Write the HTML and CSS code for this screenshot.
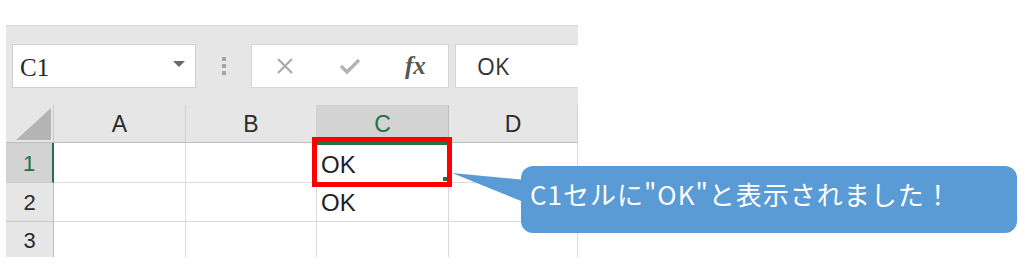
FILE: index.html
```html
<!DOCTYPE html>
<html lang="ja">
<head>
<meta charset="utf-8">
<link rel="stylesheet" href="styles.css">
</head>
<body>
<div class="sheet">
  <div class="formula-row">
    <div class="namebox">
      <span class="name">C1</span>
      <span class="caret"></span>
    </div>
    <div class="dots"><i></i><i></i><i></i></div>
    <div class="fxbox">
      <span class="fxbtn">
        <svg width="18" height="18" viewBox="0 0 18 18"><path d="M2 2 L16 16 M16 2 L2 16" stroke="#ababab" stroke-width="2.2" fill="none"/></svg>
      </span>
      <span class="fxbtn">
        <svg width="22" height="18" viewBox="0 0 22 18"><path d="M2 9 L8 15 L20 3" stroke="#b3b3b3" stroke-width="3.4" fill="none"/></svg>
      </span>
      <span class="fxbtn fx">fx</span>
    </div>
    <div class="valuebox">OK</div>
  </div>
  <div class="grid">
    <div class="corner"><span class="tri"></span></div>
    <div class="colh">A</div>
    <div class="colh">B</div>
    <div class="colh sel">C</div>
    <div class="colh">D</div>

    <div class="rowh sel">1</div>
    <div class="cell"></div>
    <div class="cell"></div>
    <div class="cell active">OK<span class="handle"></span></div>
    <div class="cell"></div>

    <div class="rowh">2</div>
    <div class="cell"></div>
    <div class="cell"></div>
    <div class="cell">OK</div>
    <div class="cell"></div>

    <div class="rowh last">3</div>
    <div class="cell last"></div>
    <div class="cell last"></div>
    <div class="cell last"></div>
    <div class="cell last"></div>
  </div>
  <div class="redbox"></div>
</div>
<div class="callout">
  <svg class="tail" width="80" height="40" viewBox="0 0 80 40"><polygon points="0,2 74,9 74,32" fill="#5b9bd5"/></svg>
  <div class="bubble">C1セルに"OK"と表示されました！</div>
</div>
</body>
</html>
```
FILE: styles.css
```css
* { box-sizing: border-box; }
html, body { margin: 0; padding: 0; }
body {
  width: 1024px;
  height: 264px;
  background: #ffffff;
  position: relative;
  overflow: hidden;
  font-family: "Liberation Sans", Arial, sans-serif;
}
.sheet {
  position: relative;
  margin-left: 6px;
  margin-top: 25px;
  width: 572px;
  background: #e6e6e6;
  border-top: 1px solid #d8d8d8;
}
.formula-row {
  display: flex;
  align-items: stretch;
  height: 79px;
  padding-top: 18px;
  padding-bottom: 17px;
}
.namebox {
  margin-left: 6px;
  width: 184px;
  background: #ffffff;
  border: 1px solid #cfcfcf;
  display: flex;
  align-items: center;
  justify-content: space-between;
  padding: 0 10px 0 7px;
}
.name {
  font-family: "Liberation Serif", "Times New Roman", serif;
  font-size: 25px;
  color: #262626;
  padding-top: 4px;
}
.caret {
  width: 0;
  height: 0;
  border-left: 6px solid transparent;
  border-right: 6px solid transparent;
  border-top: 6px solid #6a6a6a;
  margin-bottom: 5px;
}
.dots {
  width: 55px;
  display: flex;
  flex-direction: column;
  align-items: center;
  justify-content: center;
  gap: 3px;
}
.dots i {
  display: block;
  width: 4px;
  height: 4px;
  background: #a6a6a6;
}
.fxbox {
  width: 198px;
  background: #ffffff;
  border: 1px solid #d6d6d6;
  display: flex;
  align-items: center;
}
.fxbtn {
  width: 66px;
  display: flex;
  justify-content: center;
  align-items: center;
}
.fx {
  font-family: "Liberation Serif", "Times New Roman", serif;
  font-style: italic;
  font-weight: bold;
  font-size: 25px;
  color: #555555;
}
.valuebox {
  margin-left: 6px;
  flex: 1;
  background: #ffffff;
  border: 1px solid #d6d6d6;
  border-right: none;
  display: flex;
  align-items: center;
  padding-left: 21px;
  font-family: "Open Sans", "Liberation Sans", sans-serif;
  font-size: 23px;
  color: #333333;
}
.grid {
  display: grid;
  grid-template-columns: 48px 132px 131px 132px 129px;
  grid-template-rows: 38px 40px 39px 35px;
}
.corner {
  background: #e6e6e6;
  border-right: 1px solid #c8c8c8;
  border-bottom: 1px solid #bdbdbd;
  position: relative;
}
.tri {
  position: absolute;
  left: 10px;
  top: 3px;
  width: 0;
  height: 0;
  border-left: 35px solid transparent;
  border-bottom: 32px solid #b4b4b4;
}
.colh {
  background: #e6e6e6;
  border-right: 1px solid #d0d0d0;
  border-bottom: 1px solid #bdbdbd;
  display: flex;
  align-items: center;
  justify-content: center;
  font-size: 23px;
  color: #2b2b2b;
  padding-top: 2px;
}
.colh.sel {
  background: #d3d3d3;
  color: #217346;
  border-bottom: 2px solid #217346;
  border-right-color: #bdbdbd;
}
.rowh {
  background: #e6e6e6;
  border-right: 1px solid #bdbdbd;
  border-bottom: 1px solid #c8c8c8;
  display: flex;
  align-items: center;
  justify-content: center;
  font-size: 22px;
  color: #2b2b2b;
  padding-top: 2px;
}
.rowh.sel {
  background: #d3d3d3;
  color: #217346;
  border-right: 2px solid #217346;
}
.rowh.last { border-bottom: none; }
.cell {
  background: #ffffff;
  border-right: 1px solid #dadada;
  border-bottom: 1px solid #dadada;
  display: flex;
  align-items: center;
  padding-left: 4px;
  padding-top: 2px;
  font-size: 24px;
  color: #222222;
  position: relative;
}
.cell.last { border-bottom: none; }
.cell.active { border-top: 2px solid #217346; }
.handle {
  position: absolute;
  right: 1px;
  bottom: 1px;
  width: 4px;
  height: 4px;
  background: #217346;
}
.redbox {
  position: absolute;
  left: 306px;
  top: 111px;
  width: 140px;
  height: 50px;
  border: 5px solid #ff0000;
}
.callout {
  position: absolute;
  left: 452px;
  top: 166px;
  display: flex;
}
.tail {
  position: absolute;
  left: 0;
  top: 5px;
}
.bubble {
  margin-left: 69px;
  width: 496px;
  height: 67px;
  background: #5b9bd5;
  border-radius: 12px;
  color: #ffffff;
  font-family: "Noto Sans CJK JP", "Noto Sans", sans-serif;
  font-size: 26px;
  letter-spacing: 1px;
  display: flex;
  align-items: center;
  padding-left: 9px;
  padding-bottom: 12px;
  position: relative;
}
```
